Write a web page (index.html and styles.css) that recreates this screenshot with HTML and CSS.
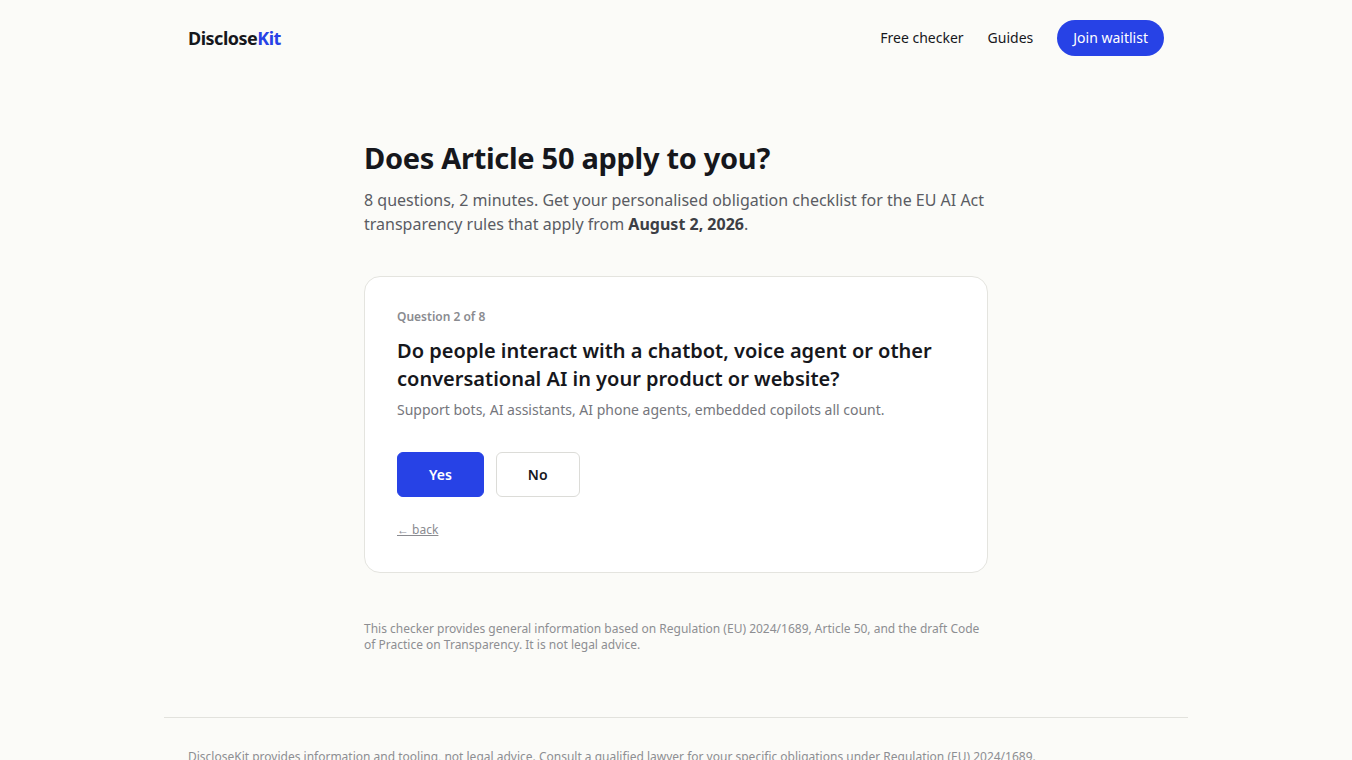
FILE: index.html
```html
<!DOCTYPE html>
<html lang="en">
<head>
  <meta charset="UTF-8">
  <meta name="viewport" content="width=device-width, initial-scale=1.0">
  <title>DiscloseKit – Article 50 checker</title>
  <link rel="stylesheet" href="styles.css">
</head>
<body>
  <header class="site-header">
    <a href="/" class="logo">Disclose<span class="logo-accent">Kit</span></a>
    <nav class="nav">
      <a href="/checker" class="nav-link">Free checker</a>
      <a href="/guides" class="nav-link">Guides</a>
      <a href="/waitlist" class="nav-button">Join waitlist</a>
    </nav>
  </header>

  <main class="checker">
    <h1 class="checker-title">Does Article 50 apply to you?</h1>
    <p class="checker-intro">8 questions, 2 minutes. Get your personalised obligation checklist for the EU AI Act transparency rules that apply from <strong>August 2, 2026</strong>.</p>

    <div class="question-card">
      <div class="question-step">Question 2 of 8</div>
      <h2 class="question-text">Do people interact with a chatbot, voice agent or other conversational AI in your product or website?</h2>
      <p class="question-hint">Support bots, AI assistants, AI phone agents, embedded copilots all count.</p>
      <div class="answers">
        <button class="answer answer-yes">Yes</button>
        <button class="answer">No</button>
      </div>
      <a href="#" class="back-link">← back</a>
    </div>

    <p class="checker-note">This checker provides general information based on Regulation (EU) 2024/1689, Article 50, and the draft Code of Practice on Transparency. It is not legal advice.</p>
  </main>

  <footer class="site-footer">
    <p>DiscloseKit provides information and tooling, not legal advice. Consult a qualified lawyer for your specific obligations under Regulation (EU) 2024/1689.</p>
  </footer>
</body>
</html>
```

FILE: styles.css
```css
body {
  margin: 0;
  background-color: #fbfbf8;
  color: #16171c;
  font-family: "Noto Sans", "Open Sans", sans-serif;
}
a {
  color: inherit;
  text-decoration: none;
}

/* header */
.site-header {
  max-width: 976px;
  margin: 0 auto;
  padding: 20px 24px;
  display: flex;
  align-items: center;
  justify-content: space-between;
}
.logo {
  font-size: 18px;
  font-weight: 700;
  letter-spacing: -0.5px;
  margin-top: -1px;
}
.logo-accent {
  color: #2742e6;
}
.nav {
  display: flex;
  align-items: center;
  gap: 24px;
  font-size: 14px;
}
.nav-link {
  margin-top: -1px;
}
.nav-button {
  background-color: #2742e6;
  color: white;
  height: 36px;
  line-height: 35px;
  padding: 0 16px;
  border-radius: 18px;
}

/* checker */
.checker {
  width: 624px;
  margin: 0 auto;
  padding-top: 62px;
}
.checker-title {
  margin: 0;
  font-size: 29px;
  line-height: 40px;
  font-weight: 700;
  letter-spacing: -0.3px;
}
.checker-intro {
  margin: 10px 0 40px;
  font-size: 16px;
  line-height: 24px;
  color: #5a5c63;
}
.checker-intro strong {
  color: #3d3f45;
}
.question-card {
  background-color: white;
  border: 1px solid #e4e4df;
  border-radius: 16px;
  padding: 32px 32px 33px;
}
.question-step {
  font-size: 12px;
  font-weight: 600;
  color: #8a8b90;
  line-height: 16px;
}
.question-text {
  margin: 12px 0 0;
  font-size: 20px;
  line-height: 28px;
  font-weight: 600;
}
.question-hint {
  margin: 7px 0 0;
  font-size: 14px;
  line-height: 20px;
  color: #75767c;
}
.answers {
  display: flex;
  gap: 12px;
  margin-top: 32px;
}
.answer {
  height: 45px;
  padding: 0 31px;
  border: 1px solid #dcdcd8;
  border-radius: 6px;
  background-color: white;
  color: #16171c;
  font-family: inherit;
  font-size: 14px;
  font-weight: 600;
  cursor: pointer;
}
.answer-yes {
  background-color: #2742e6;
  border-color: #2742e6;
  color: white;
}
.back-link {
  display: inline-block;
  margin-top: 24px;
  font-size: 12px;
  color: #8a8b90;
  text-decoration: underline;
}
.checker-note {
  margin: 48px 0 0;
  font-size: 12px;
  line-height: 16px;
  color: #8d8e92;
}

/* footer */
.site-footer {
  max-width: 976px;
  margin: 64px auto 0;
  padding: 30px 24px;
  border-top: 1px solid #e2e2dd;
  font-size: 12px;
  color: #8d8e92;
}
.site-footer p {
  margin: 0;
}
```
